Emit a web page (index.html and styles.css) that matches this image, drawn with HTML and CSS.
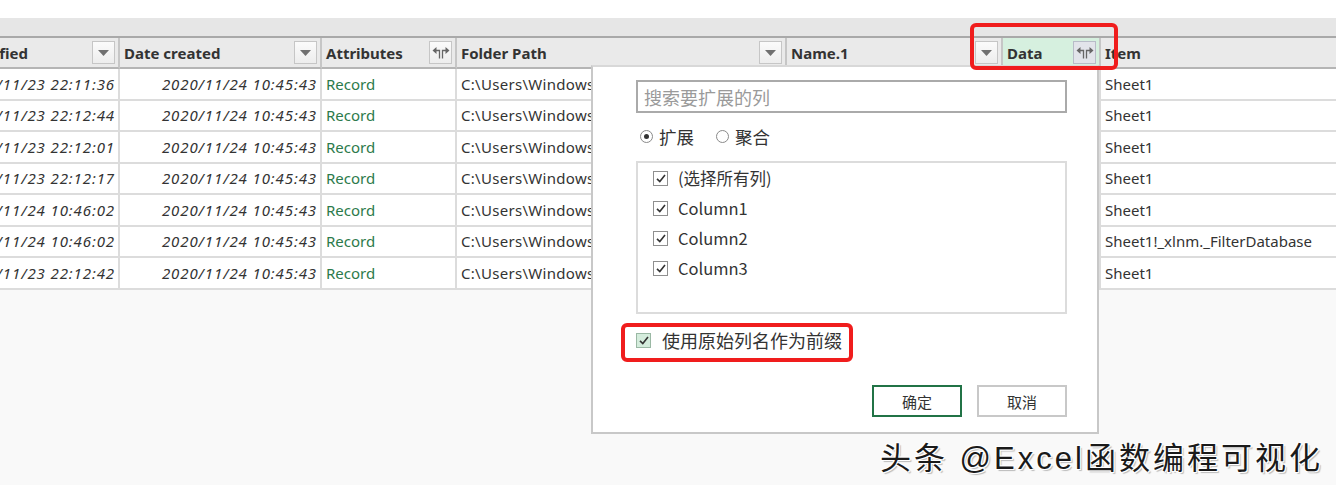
FILE: index.html
```html
<!DOCTYPE html>
<html lang="zh-CN">
<head>
<meta charset="utf-8">
<title>展开列</title>
<link rel="stylesheet" href="styles.css">
</head>
<body>
<div class="page">
  <div class="top-band"></div>
  <div class="tool-band"></div>
  <div class="grid">
    <div class="hcell hcell-first"><span class="hlabel">Date modified</span><span class="hbtn hbtn-first"><svg width="11" height="6" viewBox="0 0 11 6"><path d="M0 0H11L5.5 6Z" fill="#707070"/></svg></span></div>
    <div class="hcell"><span class="hlabel">Date created</span><span class="hbtn"><svg width="11" height="6" viewBox="0 0 11 6"><path d="M0 0H11L5.5 6Z" fill="#707070"/></svg></span></div>
    <div class="hcell"><span class="hlabel">Attributes</span><span class="hbtn"><svg width="18" height="13" viewBox="0 0 18 13"><path d="M0.5 4.5L4.5 1V8Z M13.5 1L17.5 4.5L13.5 8Z" fill="#666"/><path d="M4 4.5H7.5V12.5 M10.5 12.5V4.5H14" fill="none" stroke="#666" stroke-width="1.3"/></svg></span></div>
    <div class="hcell"><span class="hlabel">Folder Path</span><span class="hbtn"><svg width="11" height="6" viewBox="0 0 11 6"><path d="M0 0H11L5.5 6Z" fill="#707070"/></svg></span></div>
    <div class="hcell"><span class="hlabel">Name.1</span><span class="hbtn"><svg width="11" height="6" viewBox="0 0 11 6"><path d="M0 0H11L5.5 6Z" fill="#707070"/></svg></span></div>
    <div class="hcell hcell-data"><span class="hlabel">Data</span><span class="hbtn hbtn-data"><svg width="18" height="13" viewBox="0 0 18 13"><path d="M0.5 4.5L4.5 1V8Z M13.5 1L17.5 4.5L13.5 8Z" fill="#666"/><path d="M4 4.5H7.5V12.5 M10.5 12.5V4.5H14" fill="none" stroke="#666" stroke-width="1.3"/></svg></span></div>
    <div class="hcell hcell-last"><span class="hlabel">Item</span></div>

    <div class="cell date"><span>2020/11/23 22:11:36</span></div><div class="cell date"><span>2020/11/24 10:45:43</span></div><div class="cell rec">Record</div><div class="cell path">C:\Users\Windows10\Desktop\</div><div class="cell"></div><div class="cell data"></div><div class="cell item">Sheet1</div>
    <div class="cell date"><span>2020/11/23 22:12:44</span></div><div class="cell date"><span>2020/11/24 10:45:43</span></div><div class="cell rec">Record</div><div class="cell path">C:\Users\Windows10\Desktop\</div><div class="cell"></div><div class="cell data"></div><div class="cell item">Sheet1</div>
    <div class="cell date"><span>2020/11/23 22:12:01</span></div><div class="cell date"><span>2020/11/24 10:45:43</span></div><div class="cell rec">Record</div><div class="cell path">C:\Users\Windows10\Desktop\</div><div class="cell"></div><div class="cell data"></div><div class="cell item">Sheet1</div>
    <div class="cell date"><span>2020/11/23 22:12:17</span></div><div class="cell date"><span>2020/11/24 10:45:43</span></div><div class="cell rec">Record</div><div class="cell path">C:\Users\Windows10\Desktop\</div><div class="cell"></div><div class="cell data"></div><div class="cell item">Sheet1</div>
    <div class="cell date"><span>2020/11/24 10:46:02</span></div><div class="cell date"><span>2020/11/24 10:45:43</span></div><div class="cell rec">Record</div><div class="cell path">C:\Users\Windows10\Desktop\</div><div class="cell"></div><div class="cell data"></div><div class="cell item">Sheet1</div>
    <div class="cell date"><span>2020/11/24 10:46:02</span></div><div class="cell date"><span>2020/11/24 10:45:43</span></div><div class="cell rec">Record</div><div class="cell path">C:\Users\Windows10\Desktop\</div><div class="cell"></div><div class="cell data"></div><div class="cell item">Sheet1!_xlnm._FilterDatabase</div>
    <div class="cell date"><span>2020/11/23 22:12:42</span></div><div class="cell date"><span>2020/11/24 10:45:43</span></div><div class="cell rec">Record</div><div class="cell path">C:\Users\Windows10\Desktop\</div><div class="cell"></div><div class="cell data"></div><div class="cell item">Sheet1</div>
  </div>
  <div class="empty"></div>

  <div class="dialog">
    <div class="search">搜索要扩展的列</div>
    <div class="radios">
      <span class="radio on"></span><span class="rlabel">扩展</span>
      <span class="radio"></span><span class="rlabel">聚合</span>
    </div>
    <div class="list">
      <div class="item-row"><span class="cb"><svg width="10" height="9" viewBox="0 0 10 9"><path d="M1 4.8L3.8 7.5L9 1" fill="none" stroke="#333" stroke-width="1.6"/></svg></span><span class="cb-label">(选择所有列)</span></div>
      <div class="item-row"><span class="cb"><svg width="10" height="9" viewBox="0 0 10 9"><path d="M1 4.8L3.8 7.5L9 1" fill="none" stroke="#333" stroke-width="1.6"/></svg></span><span class="cb-label">Column1</span></div>
      <div class="item-row"><span class="cb"><svg width="10" height="9" viewBox="0 0 10 9"><path d="M1 4.8L3.8 7.5L9 1" fill="none" stroke="#333" stroke-width="1.6"/></svg></span><span class="cb-label">Column2</span></div>
      <div class="item-row"><span class="cb"><svg width="10" height="9" viewBox="0 0 10 9"><path d="M1 4.8L3.8 7.5L9 1" fill="none" stroke="#333" stroke-width="1.6"/></svg></span><span class="cb-label">Column3</span></div>
    </div>
    <div class="prefix"><span class="cb cb-green"><svg width="10" height="9" viewBox="0 0 10 9"><path d="M1 4.8L3.8 7.5L9 1" fill="none" stroke="#333" stroke-width="1.6"/></svg></span><span class="prefix-label">使用原始列名作为前缀</span></div>
    <div class="buttons">
      <span class="btn btn-ok">确定</span>
      <span class="btn">取消</span>
    </div>
  </div>

  <div class="mark mark-header"></div>
  <div class="mark mark-prefix"></div>
  <div class="watermark">头条 @Excel函数编程可视化</div>
</div>
</body>
</html>
```
FILE: styles.css
```css
html, body {
  margin: 0;
  padding: 0;
  background: #ffffff;
}
.page {
  position: relative;
  width: 1336px;
  height: 485px;
  overflow: hidden;
  font-family: "Noto Sans", "Noto Sans CJK SC", sans-serif;
  color: #333;
  background: #f9f9f9;
}
.top-band {
  height: 18px;
  background: #ffffff;
}
.tool-band {
  height: 18px;
  background: #e6e6e6;
  border-bottom: 2px solid #a9a9a9;
}
.grid {
  display: grid;
  grid-template-columns: 120px 202px 135px 330px 216px 98px 1fr;
  grid-auto-rows: 31.5px;
  grid-template-rows: 31px;
  background: #ffffff;
}
.hcell {
  display: flex;
  align-items: center;
  box-sizing: border-box;
  padding: 0 3px 0 4px;
  background: #eaeaea;
  border-right: 2px solid #c6c6c6;
  border-bottom: 2px solid #b5b5b5;
  font-weight: 700;
  font-size: 15px;
  overflow: hidden;
  white-space: nowrap;
}
.hcell .hlabel {
  flex: 1;
}
.hcell-first {
  justify-content: flex-end;
}
.hcell-first .hlabel {
  flex: none;
}
.hbtn {
  flex: none;
  width: 21px;
  height: 21px;
  display: flex;
  align-items: center;
  justify-content: center;
  border: 1px solid #c6c6c6;
  background: linear-gradient(#fbfbfb, #ededed);
}
.hbtn-first {
  margin-left: 64px;
}
.hcell-data {
  background: #d6f0df;
}
.hbtn-data {
  background: #e2e4ea;
  border-color: #b8bcc8;
}
.hcell-last {
  border-right: none;
}
.cell {
  display: flex;
  align-items: center;
  box-sizing: border-box;
  padding: 0 3px 0 4px;
  border-right: 2px solid #dcdcdc;
  border-bottom: 2px solid #dcdcdc;
  font-size: 15px;
  white-space: nowrap;
  overflow: hidden;
}
.cell.date {
  justify-content: flex-end;
  font-style: italic;
  letter-spacing: 0.9px;
}
.cell.rec {
  color: #2c7a4b;
}
.cell.path {
  letter-spacing: 0.3px;
}
.cell.data {
  background: #d7eadd;
}
.cell.item {
  border-right: none;
}
.empty {
  height: 200px;
}
.dialog {
  position: absolute;
  left: 591px;
  top: 65px;
  width: 431px;
  height: 352px;
  padding: 13px 30px 0 43px;
  background: #ffffff;
  border: 2px solid #c8c8c8;
  border-top-color: #d8d8d8;
  font-family: "Noto Sans CJK SC", "Noto Sans", sans-serif;
  display: flex;
  flex-direction: column;
}
.search {
  box-sizing: border-box;
  width: 431px;
  height: 33px;
  border: 2px solid #aaaaaa;
  padding: 0 6px;
  display: flex;
  align-items: center;
  font-size: 18px;
  color: #9a9a9a;
  flex: none;
}
.radios {
  display: flex;
  align-items: center;
  height: 24px;
  margin-top: 11px;
  padding-left: 4px;
  font-size: 17.5px;
  color: #333;
  flex: none;
}
.radio {
  box-sizing: border-box;
  width: 13px;
  height: 13px;
  border: 1px solid #8a8a8a;
  border-radius: 50%;
  display: flex;
  align-items: center;
  justify-content: center;
  margin-right: 6px;
}
.radio.on::after {
  content: "";
  width: 5px;
  height: 5px;
  border-radius: 50%;
  background: #333;
}
.rlabel {
  margin-right: 22px;
}
.list {
  box-sizing: border-box;
  width: 431px;
  height: 153px;
  margin-top: 13px;
  border: 2px solid #dcdcdc;
  padding: 0 0 0 15px;
  display: flex;
  flex-direction: column;
  flex: none;
}
.item-row {
  display: flex;
  align-items: center;
  height: 30px;
  font-size: 16.5px;
}
.cb {
  box-sizing: border-box;
  width: 15px;
  height: 15px;
  border: 1px solid #8f8f8f;
  background: #ffffff;
  display: flex;
  align-items: center;
  justify-content: center;
  margin-right: 10px;
  flex: none;
}
.cb-green {
  background: #d4ecdc;
  border-color: #9ab8a4;
}
.prefix {
  display: flex;
  align-items: center;
  height: 26px;
  margin-top: 13px;
  font-size: 18px;
  flex: none;
}
.prefix-label {
  margin-left: 1px;
}
.buttons {
  display: flex;
  justify-content: flex-end;
  gap: 15px;
  width: 431px;
  margin-top: 32px;
  flex: none;
}
.btn {
  box-sizing: border-box;
  width: 90px;
  height: 32px;
  border: 2px solid #c8c8c8;
  display: flex;
  align-items: center;
  justify-content: center;
  font-size: 15px;
  color: #333;
  background: #ffffff;
}
.btn-ok {
  border-color: #217346;
}
.mark {
  position: absolute;
  border: 4px solid #f01d1d;
  border-radius: 6px;
  box-sizing: border-box;
}
.mark-header {
  left: 970px;
  top: 23px;
  width: 148px;
  height: 47px;
}
.mark-prefix {
  left: 621px;
  top: 323px;
  width: 232px;
  height: 39px;
}
.watermark {
  position: absolute;
  left: 880px;
  top: 433px;
  font-family: "Liberation Sans", "Noto Sans CJK SC", sans-serif;
  font-size: 31px;
  color: #1a1a1a;
  white-space: nowrap;
  letter-spacing: 3px;
  text-shadow: 1px 1px 0 #fff, -1px -1px 0 #fff, 1px -1px 0 #fff, -1px 1px 0 #fff, 2px 2px 1px #bbb;
}
```
